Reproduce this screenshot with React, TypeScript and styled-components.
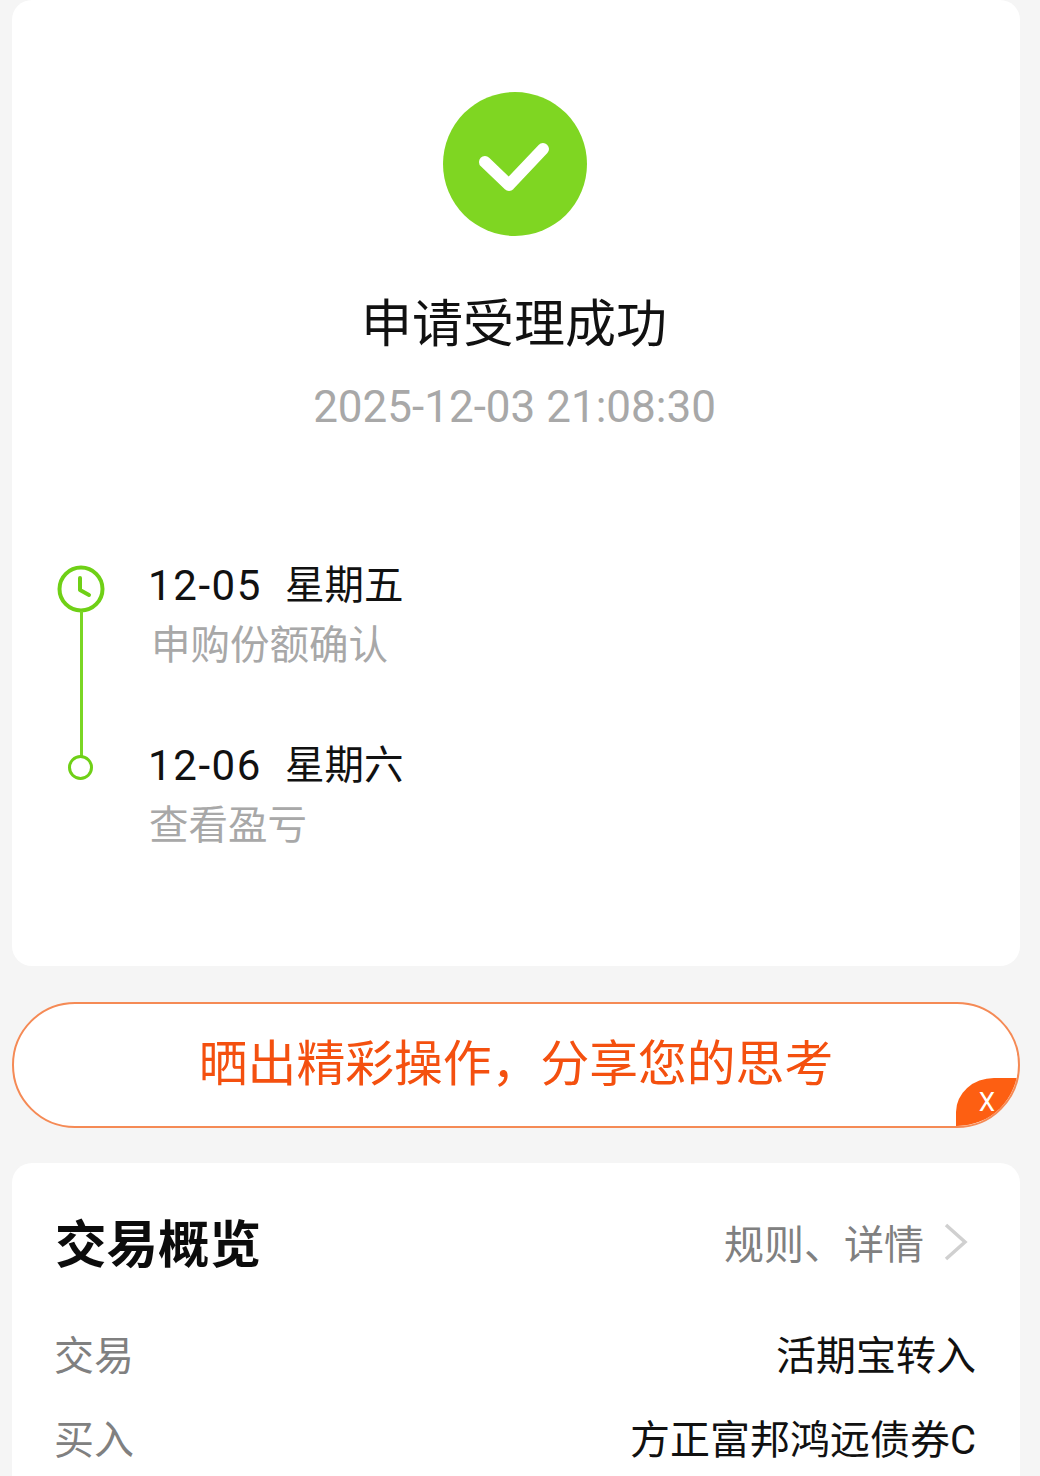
import React, { FunctionComponent } from "react";
import styled, { createGlobalStyle } from "styled-components";

const GlobalStyle = createGlobalStyle`
  html, body {
    margin: 0;
    padding: 0;
    background: #f5f5f5;
    font-family: Roboto, "Noto Sans CJK SC", sans-serif;
  }
`;

const Page = styled.div`
  width: 1040px;
  height: 1476px;
  overflow: hidden;
  box-sizing: border-box;
  padding: 0 20px 0 12px;
  display: flex;
  flex-direction: column;
  background: #f5f5f5;
`;

const ResultCard = styled.section`
  height: 966px;
  flex: none;
  box-sizing: border-box;
  padding-top: 92px;
  background: #fff;
  border-radius: 20px;
  display: flex;
  flex-direction: column;
`;

const CheckBadge = styled.svg`
  display: block;
  width: 144px;
  height: 144px;
  margin: 0 0 0 431px;
`;

const Title = styled.h1`
  margin: 54px 0 0;
  padding-right: 4px;
  font-size: 51px;
  line-height: 70px;
  font-weight: 400;
  color: #111;
  text-align: center;
`;

const Timestamp = styled.div`
  margin-top: 22px;
  padding-right: 3px;
  font-size: 44px;
  line-height: 50px;
  color: #a8a8a8;
  text-align: center;
`;

const Timeline = styled.div`
  margin-top: 129px;
  padding-left: 45px;
  display: flex;
  flex-direction: column;
  gap: 80px;
`;

const Step = styled.div`
  position: relative;
  display: flex;
  height: 100px;
`;

const StepMarker = styled.div`
  width: 48px;
  margin-right: 44px;
  flex: none;
  display: flex;
  justify-content: center;
`;

const ClockIcon = styled.svg`
  width: 48px;
  height: 48px;
  margin-top: 4px;
`;

const Dot = styled.div`
  width: 25px;
  height: 25px;
  margin: 14px 2px 0 0;
  box-sizing: border-box;
  border: 3px solid #6fd016;
  border-radius: 50%;
  background: #fff;
  position: relative;
  z-index: 1;
`;

const Connector = styled.div`
  position: absolute;
  left: 23px;
  top: 50px;
  width: 2.5px;
  height: 160px;
  background: #7ad624;
`;

const StepText = styled.div`
  display: flex;
  flex-direction: column;
  margin-left: -1px;
`;

const StepDate = styled.div`
  font-size: 39.5px;
  line-height: 50px;
  color: #111;
  display: flex;
`;

const DateNumber = styled.span`
  width: 137px;
  font-size: 42px;
  letter-spacing: 1.6px;
`;

const StepNote = styled.div<{ $inset?: number }>`
  margin-top: 10px;
  padding-left: ${(props) => props.$inset || 0}px;
  font-size: 39.5px;
  line-height: 50px;
  color: #a8a8a8;
`;

const SharePill = styled.div`
  position: relative;
  flex: none;
  height: 126px;
  margin-top: 36px;
  box-sizing: border-box;
  border: 2px solid #f58a55;
  border-radius: 63px;
  background: #fff;
  overflow: hidden;
  display: flex;
  align-items: center;
  justify-content: center;
`;

const ShareText = styled.div`
  font-size: 48.8px;
  line-height: 60px;
  color: #f4500f;
`;

const CloseCorner = styled.div`
  position: absolute;
  right: 0;
  bottom: 0;
  width: 62px;
  height: 48px;
  box-sizing: border-box;
  background: #fd5f12;
  border-top-left-radius: 38px 34px;
  color: #fff;
  font-size: 26px;
  line-height: 48px;
  text-align: center;
`;

const OverviewCard = styled.section`
  flex: none;
  margin-top: 35px;
  height: 340px;
  box-sizing: border-box;
  padding: 50px 44px 0 43px;
  background: #fff;
  border-radius: 20px 20px 0 0;
`;

const OverviewHeader = styled.div`
  height: 66px;
  display: flex;
  align-items: center;
  justify-content: space-between;
`;

const OverviewTitle = styled.h2`
  margin: 0;
  font-size: 51.5px;
  line-height: 66px;
  font-weight: 700;
  color: #0c0c0c;
`;

const OverviewLink = styled.div`
  display: flex;
  align-items: center;
  margin-top: -8px;
  font-size: 40px;
  color: #808080;
`;

const Chevron = styled.svg`
  width: 26px;
  height: 38px;
  margin-left: 19px;
  margin-right: 7px;
`;

const Rows = styled.div`
  margin-top: 53px;
  display: flex;
  flex-direction: column;
  gap: 34px;
`;

const Row = styled.div`
  height: 50px;
  display: flex;
  align-items: center;
  justify-content: space-between;
  font-size: 40px;
  line-height: 50px;
`;

const RowLabel = styled.span`
  color: #808080;
  margin-left: -1px;
`;

const RowValue = styled.span`
  color: #111;
`;

const rows = [
  { label: "交易", value: "活期宝转入" },
  { label: "买入", value: "方正富邦鸿远债券C" },
];

const App: FunctionComponent = () => {
  return (
    <Page>
      <GlobalStyle />
      <ResultCard>
        <CheckBadge viewBox="0 0 144 144">
          <circle cx="72" cy="72" r="72" fill="#7fd622" />
          <path
            d="M42 70 L66 93 L100 57"
            fill="none"
            stroke="#fff"
            strokeWidth="12"
            strokeLinecap="round"
            strokeLinejoin="round"
          />
        </CheckBadge>
        <Title>申请受理成功</Title>
        <Timestamp>2025-12-03 21:08:30</Timestamp>
        <Timeline>
          <Step>
            <StepMarker>
              <ClockIcon viewBox="0 0 48 48">
                <circle cx="24" cy="24" r="21.5" fill="none" stroke="#6fd016" strokeWidth="4" />
                <path
                  d="M23 13 V25 L32 30"
                  fill="none"
                  stroke="#6fd016"
                  strokeWidth="4"
                  strokeLinecap="round"
                  strokeLinejoin="round"
                />
              </ClockIcon>
            </StepMarker>
            <Connector />
            <StepText>
              <StepDate>
                <DateNumber>12-05</DateNumber>
                星期五
              </StepDate>
              <StepNote $inset={3}>申购份额确认</StepNote>
            </StepText>
          </Step>
          <Step>
            <StepMarker>
              <Dot />
            </StepMarker>
            <StepText>
              <StepDate>
                <DateNumber>12-06</DateNumber>
                星期六
              </StepDate>
              <StepNote $inset={1}>查看盈亏</StepNote>
            </StepText>
          </Step>
        </Timeline>
      </ResultCard>
      <SharePill>
        <ShareText>晒出精彩操作，分享您的思考</ShareText>
        <CloseCorner>X</CloseCorner>
      </SharePill>
      <OverviewCard>
        <OverviewHeader>
          <OverviewTitle>交易概览</OverviewTitle>
          <OverviewLink>
            规则、详情
            <Chevron viewBox="0 0 26 38">
              <path d="M3 2 L22 19 L3 36" fill="none" stroke="#d0d0d0" strokeWidth="3.5" />
            </Chevron>
          </OverviewLink>
        </OverviewHeader>
        <Rows>
          {rows.map((row) => (
            <Row key={row.label}>
              <RowLabel>{row.label}</RowLabel>
              <RowValue>{row.value}</RowValue>
            </Row>
          ))}
        </Rows>
      </OverviewCard>
    </Page>
  );
};

export default App;
